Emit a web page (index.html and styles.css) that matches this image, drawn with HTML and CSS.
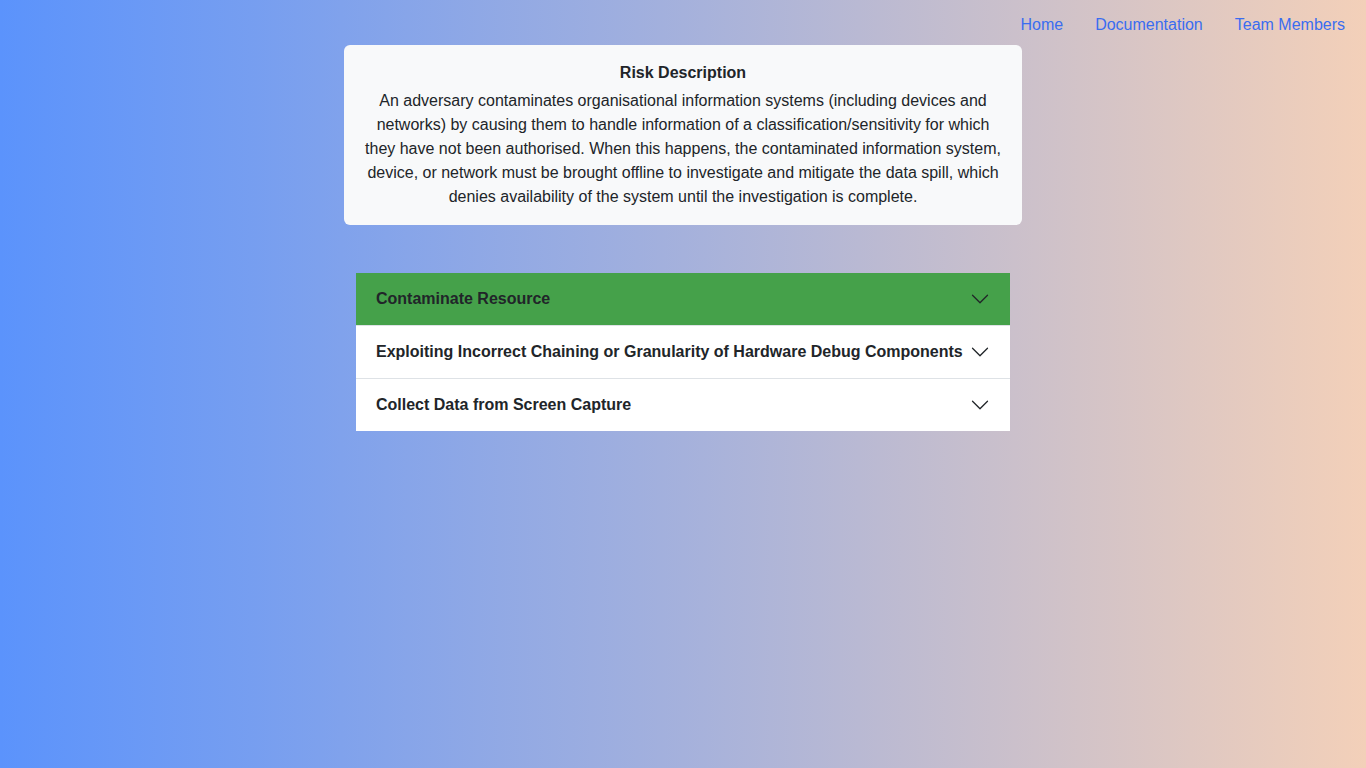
FILE: index.html
```html
<!DOCTYPE html>
<html lang="en">
<head>
<meta charset="utf-8">
<title>Risk Description</title>
<link rel="stylesheet" href="styles.css">
</head>
<body>
<nav class="topnav">
  <a class="nav-link" href="#">Home</a>
  <a class="nav-link" href="#">Documentation</a>
  <a class="nav-link" href="#">Team Members</a>
</nav>
<main class="content">
  <section class="risk-card">
    <h2 class="risk-title">Risk Description</h2>
    <p class="risk-text">An adversary contaminates organisational information systems (including devices and networks) by causing them to handle information of a classification/sensitivity for which they have not been authorised. When this happens, the contaminated information system, device, or network must be brought offline to investigate and mitigate the data spill, which denies availability of the system until the investigation is complete.</p>
  </section>
  <div class="accordion">
    <div class="acc-item">
      <button class="acc-button active"><span>Contaminate Resource</span>
        <svg class="chev" viewBox="0 0 16 16"><path fill="#212529" fill-rule="evenodd" d="M1.646 4.646a.5.5 0 0 1 .708 0L8 10.293l5.646-5.647a.5.5 0 0 1 .708.708l-6 6a.5.5 0 0 1-.708 0l-6-6a.5.5 0 0 1 0-.708z"/></svg>
      </button>
    </div>
    <div class="acc-item">
      <button class="acc-button"><span>Exploiting Incorrect Chaining or Granularity of Hardware Debug Components</span>
        <svg class="chev" viewBox="0 0 16 16"><path fill="#212529" fill-rule="evenodd" d="M1.646 4.646a.5.5 0 0 1 .708 0L8 10.293l5.646-5.647a.5.5 0 0 1 .708.708l-6 6a.5.5 0 0 1-.708 0l-6-6a.5.5 0 0 1 0-.708z"/></svg>
      </button>
    </div>
    <div class="acc-item">
      <button class="acc-button"><span>Collect Data from Screen Capture</span>
        <svg class="chev" viewBox="0 0 16 16"><path fill="#212529" fill-rule="evenodd" d="M1.646 4.646a.5.5 0 0 1 .708 0L8 10.293l5.646-5.647a.5.5 0 0 1 .708.708l-6 6a.5.5 0 0 1-.708 0l-6-6a.5.5 0 0 1 0-.708z"/></svg>
      </button>
    </div>
  </div>
</main>
</body>
</html>
```
FILE: styles.css
```css
html, body {
  margin: 0;
  padding: 0;
  height: 100%;
}
body {
  font-family: "Liberation Sans", Arial, sans-serif;
  font-size: 16px;
  line-height: 1.5;
  color: #212529;
  background: linear-gradient(to right, #5b93fc 0%, #a5b1dc 50%, #f3d0b9 100%);
  min-height: 768px;
}
.topnav {
  display: flex;
  justify-content: flex-end;
  padding: 5px 5px 0 0;
  height: 40px;
}
.nav-link {
  color: #3a6df0;
  text-decoration: none;
  padding: 8px 16px;
}
.content {
  display: flex;
  flex-direction: column;
  align-items: center;
}
.risk-card {
  width: 678px;
  box-sizing: border-box;
  background: #f8f9fa;
  border-radius: 6px;
  padding: 16px 16px 16px;
  text-align: center;
}
.risk-title {
  margin: 0 0 4px;
  font-size: 16px;
  font-weight: bold;
  line-height: 24px;
}
.risk-text {
  margin: 0;
  line-height: 24px;
}
.accordion {
  width: 654px;
  margin-top: 48px;
  background: #fff;
}
.acc-item + .acc-item {
  border-top: 1px solid #dee2e6;
}
.acc-button {
  display: flex;
  align-items: center;
  width: 100%;
  height: 52px;
  padding: 0 20px 0 20px;
  border: 0;
  background: #fff;
  font-family: inherit;
  font-size: 16px;
  font-weight: bold;
  color: #212529;
  text-align: left;
  cursor: pointer;
}
.acc-button.active {
  background: #45a14a;
}
.acc-button span {
  flex: 1;
}
.chev {
  width: 20px;
  height: 20px;
  flex-shrink: 0;
  margin-left: 4px;
}
```
